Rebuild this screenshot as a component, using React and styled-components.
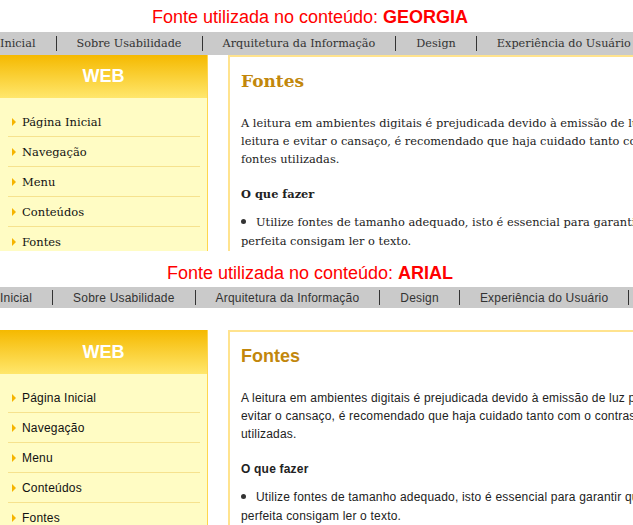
import React from 'react'
import styled, { createGlobalStyle } from 'styled-components'

const GlobalStyle = createGlobalStyle`
    html, body {
        margin: 0;
        padding: 0;
        background: #ffffff;
        overflow: hidden;
    }
    body {
        width: 633px;
        height: 525px;
    }
`

const fonts = {
    georgia: {
        body: '"DejaVu Serif", Georgia, serif',
        nav: '11.25px',
        side: '11.5px',
        size: '11.4px',
        head: '17px',
        spacing: '0',
    },
    arial: {
        body: '"Liberation Sans", Arial, sans-serif',
        nav: '12px',
        side: '12px',
        size: '12px',
        head: '18px',
        spacing: '0.2px',
    },
}

const Panel = styled.section`
    height: ${(p) => p.$height}px;
    overflow: hidden;
    font-family: ${(p) => fonts[p.$font].body};
    letter-spacing: ${(p) => fonts[p.$font].spacing};
`

const Caption = styled.h1`
    margin: 0;
    height: ${(p) => p.$height}px;
    padding-top: ${(p) => p.$top}px;
    box-sizing: border-box;
    padding-right: 13px;
    text-align: center;
    font-family: "Liberation Sans", Arial, sans-serif;
    font-size: 18px;
    font-weight: normal;
    line-height: 22px;
    letter-spacing: 0;
    color: #ff0000;

    b {
        font-weight: bold;
    }
`

const NavBar = styled.nav`
    display: flex;
    align-items: center;
    height: ${(p) => p.$height}px;
    background: #cacaca;
    white-space: nowrap;
    overflow: hidden;
    font-size: ${(p) => fonts[p.$font].nav};
    color: #333333;
`

const NavLink = styled.a`
    display: flex;
    align-items: center;
    color: inherit;
    text-decoration: none;
`

const NavSep = styled.span`
    width: 1px;
    height: 15px;
    margin: 0 20px;
    background: #333333;
`

const Body = styled.div`
    display: flex;
    align-items: flex-start;
    margin-top: ${(p) => p.$gap}px;
    gap: 20px;
`

const Sidebar = styled.aside`
    flex: 0 0 207px;
    height: 260px;
    background: #fffcc4;
    border-right: 1px solid #ffd64e;
`

const SideHead = styled.div`
    display: flex;
    align-items: center;
    justify-content: center;
    height: ${(p) => p.$height}px;
    background: linear-gradient(#f5b900, #ffe76c);
    font-family: "Liberation Sans", Arial, sans-serif;
    font-size: 18px;
    font-weight: bold;
    letter-spacing: 0;
    color: #ffffff;
`

const SideMenu = styled.ul`
    list-style: none;
    margin: 0;
    padding: 9px 7px 0 8px;
`

const SideItem = styled.li`
    display: flex;
    align-items: center;
    gap: 6px;
    height: 29px;
    padding-left: 4px;
    border-bottom: 1px solid #f6e28e;
    font-size: ${(p) => fonts[p.$font].side};
    color: #111111;

    &::before {
        content: "";
        width: 0;
        height: 0;
        border-top: 4px solid transparent;
        border-bottom: 4px solid transparent;
        border-left: 4px solid #f5b400;
    }
`

const Content = styled.main`
    flex: 1;
    min-width: 0;
    border-top: 2px solid #ffe38e;
    border-left: 2px solid #ffe38e;
    padding: 12px 0 0 11px;
    height: 260px;
`

const Heading = styled.h2`
    margin: 0;
    font-size: ${(p) => fonts[p.$font].head};
    line-height: 24px;
    letter-spacing: 0;
    color: #c2870c;
`

const Para = styled.p`
    margin: 21px 0 0;
    font-size: ${(p) => fonts[p.$font].size};
    line-height: 18px;
    color: #222222;
    white-space: nowrap;

    span {
        display: block;
    }
`

const SubHead = styled.h3`
    margin: 17px 0 0;
    font-size: ${(p) => fonts[p.$font].size};
    line-height: 18px;
    color: #222222;
`

const Bullet = styled.p`
    margin: 10px 0 0;
    font-size: ${(p) => fonts[p.$font].size};
    line-height: 19px;
    color: #222222;
    white-space: nowrap;

    span {
        display: block;
    }

    span:first-child::before {
        content: "";
        display: inline-block;
        width: 5px;
        height: 5px;
        margin: 0 10px 2px 0;
        border-radius: 50%;
        background: #333333;
    }
`

const navItems = ['Inicial', 'Sobre Usabilidade', 'Arquitetura da Informação', 'Design', 'Experiência do Usuário', 'Contato']
const menuItems = ['Página Inicial', 'Navegação', 'Menu', 'Conteúdos', 'Fontes', 'Cores']

const texts = {
    georgia: [
        'A leitura em ambientes digitais é prejudicada devido à emissão de luz pelos monitores. Para facilitar a',
        'leitura e evitar o cansaço, é recomendado que haja cuidado tanto com o contraste quanto com as',
        'fontes utilizadas.',
    ],
    arial: [
        'A leitura em ambientes digitais é prejudicada devido à emissão de luz pelos monitores. Para facilitar a leitura e',
        'evitar o cansaço, é recomendado que haja cuidado tanto com o contraste quanto com as fontes',
        'utilizadas.',
    ],
}

function Sample({ label, font, height, capHeight, capTop, navHeight, gap, headHeight }) {
    return (
        <Panel $height={height} $font={font}>
            <Caption $height={capHeight} $top={capTop}>
                Fonte utilizada no conteúdo: <b>{label}</b>
            </Caption>
            <NavBar $height={navHeight} $font={font}>
                {navItems.map((item, i) => (
                    <NavLink href="#" key={item}>
                        {i > 0 && <NavSep />}
                        {item}
                    </NavLink>
                ))}
            </NavBar>
            <Body $gap={gap}>
                <Sidebar>
                    <SideHead $height={headHeight}>WEB</SideHead>
                    <SideMenu>
                        {menuItems.map((item) => (
                            <SideItem key={item} $font={font}>{item}</SideItem>
                        ))}
                    </SideMenu>
                </Sidebar>
                <Content>
                    <Heading $font={font}>Fontes</Heading>
                    <Para $font={font}>
                        {texts[font].map((line) => <span key={line}>{line}</span>)}
                    </Para>
                    <SubHead $font={font}>O que fazer</SubHead>
                    <Bullet $font={font}>
                        <span>Utilize fontes de tamanho adequado, isto é essencial para garantir que pessoas sem uma visão</span>
                        <span>perfeita consigam ler o texto.</span>
                    </Bullet>
                </Content>
            </Body>
        </Panel>
    )
}

export default function App() {
    return (
        <>
            <GlobalStyle />
            <Sample label="GEORGIA" font="georgia" height={251} capHeight={32} capTop={6} navHeight={23} gap={0} headHeight={43} />
            <Sample label="ARIAL" font="arial" height={274} capHeight={36} capTop={11} navHeight={21} gap={22} headHeight={44} />
        </>
    )
}
